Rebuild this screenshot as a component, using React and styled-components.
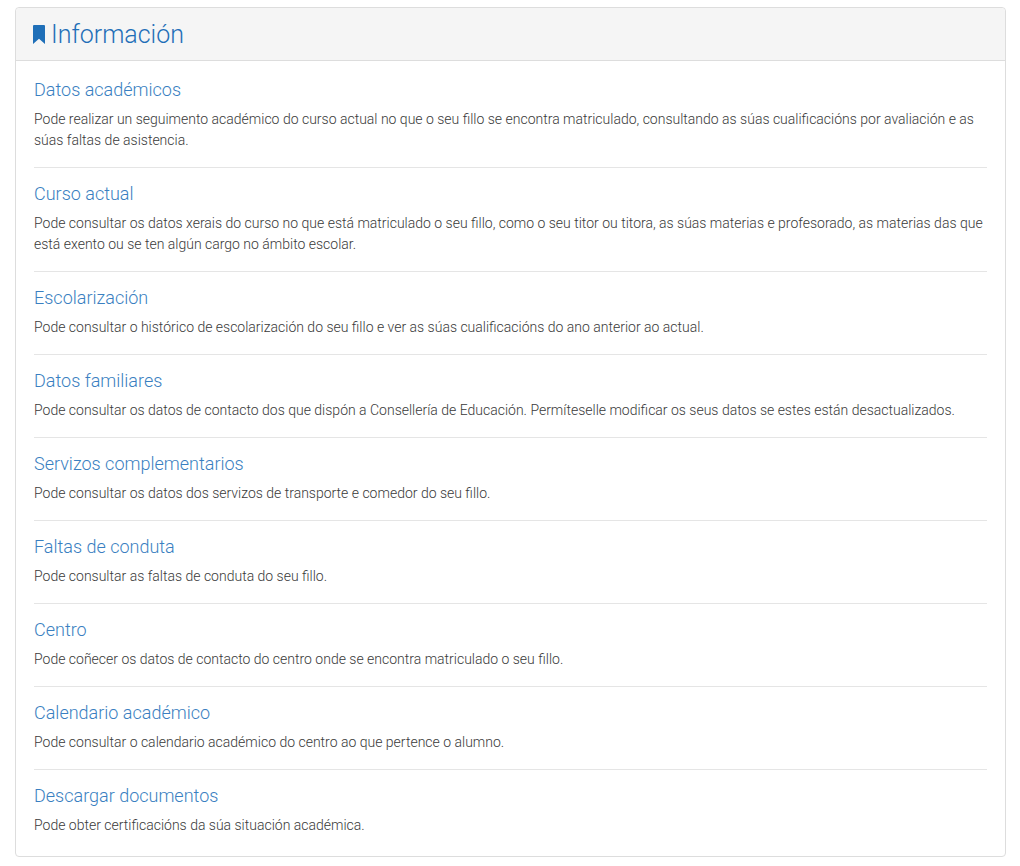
import styled, { createGlobalStyle } from "styled-components";

const Global = createGlobalStyle`
  body {
    margin: 0;
    background: #fff;
    font-family: Roboto, "Liberation Sans", sans-serif;
  }
`;

const Card = styled.div`
  margin: 7px 14px 8px 15px;
  border: 1px solid #dddddd;
  border-radius: 4px;
  background: #fff;
`;

const Header = styled.div`
  display: flex;
  align-items: center;
  gap: 6px;
  height: 52px;
  padding: 0 17px;
  background: #f5f5f5;
  border-bottom: 1px solid #dddddd;
  border-radius: 4px 4px 0 0;
`;

const Title = styled.h1`
  margin: 0;
  font-size: 25px;
  font-weight: 300;
  color: #1f6fb8;
`;

const Body = styled.div`
  padding: 3px 18px 4px 18px;
`;

const Item = styled.div`
  padding: 15px 0 16px;
  border-bottom: ${(p) => (p.$last ? "none" : "1px solid #e5e5e5")};
`;

const ItemTitle = styled.h2`
  margin: 0 0 8px;
  font-size: 18px;
  line-height: 22px;
  font-weight: 300;
  color: #3a7fc1;
`;

const Desc = styled.p`
  margin: 0;
  font-size: 14px;
  line-height: 21px;
  font-weight: 300;
  color: #3a3a3a;
`;

const items = [
  ["Datos académicos", "Pode realizar un seguimento académico do curso actual no que o seu fillo se encontra matriculado, consultando as súas cualificacións por avaliación e as súas faltas de asistencia."],
  ["Curso actual", "Pode consultar os datos xerais do curso no que está matriculado o seu fillo, como o seu titor ou titora, as súas materias e profesorado, as materias das que está exento ou se ten algún cargo no ámbito escolar."],
  ["Escolarización", "Pode consultar o histórico de escolarización do seu fillo e ver as súas cualificacións do ano anterior ao actual."],
  ["Datos familiares", "Pode consultar os datos de contacto dos que dispón a Consellería de Educación. Permíteselle modificar os seus datos se estes están desactualizados."],
  ["Servizos complementarios", "Pode consultar os datos dos servizos de transporte e comedor do seu fillo."],
  ["Faltas de conduta", "Pode consultar as faltas de conduta do seu fillo."],
  ["Centro", "Pode coñecer os datos de contacto do centro onde se encontra matriculado o seu fillo."],
  ["Calendario académico", "Pode consultar o calendario académico do centro ao que pertence o alumno."],
  ["Descargar documentos", "Pode obter certificacións da súa situación académica."],
];

export default function App() {
  return (
    <>
      <Global />
      <Card>
        <Header>
          <svg width="12" height="19" viewBox="0 0 12 19">
            <path d="M1 0h10a1 1 0 0 1 1 1v18l-6-5.2L0 19V1a1 1 0 0 1 1-1z" fill="#1f6fb8" />
          </svg>
          <Title>Información</Title>
        </Header>
        <Body>
          {items.map(([t, d], i) => (
            <Item key={t} $last={i === items.length - 1}>
              <ItemTitle>{t}</ItemTitle>
              <Desc>{d}</Desc>
            </Item>
          ))}
        </Body>
      </Card>
    </>
  );
}
